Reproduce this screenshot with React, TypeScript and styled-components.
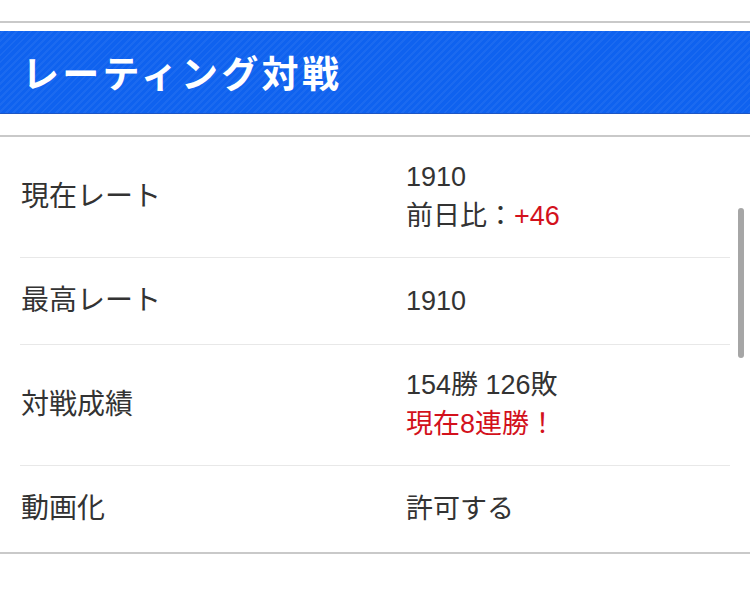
import React from "react";
import styled, { createGlobalStyle } from "styled-components";

const GlobalStyle = createGlobalStyle`
  html, body {
    margin: 0;
    padding: 0;
    background: #ffffff;
  }
  body {
    font-family: "Liberation Sans", "Noto Sans CJK JP", sans-serif;
    color: #333333;
  }
`;

const Page = styled.div`
  position: relative;
  width: 750px;
  height: 592px;
  overflow: hidden;
  padding-top: 21px;
  box-sizing: border-box;
`;

const TopRule = styled.div`
  height: 2px;
  background: #c9c9c9;
`;

const Banner = styled.div`
  margin-top: 8px;
  height: 82px;
  display: flex;
  align-items: center;
  padding-left: 22px;
  border-bottom: 1px solid #1d56c4;
  background-color: #0f62ef;
  background-image: repeating-linear-gradient(
    -45deg,
    rgba(255, 255, 255, 0.05) 0px,
    rgba(255, 255, 255, 0.05) 2px,
    rgba(255, 255, 255, 0) 2px,
    rgba(255, 255, 255, 0) 5px
  );

  h1 {
    margin: 0;
    font-family: "Noto Sans CJK JP", sans-serif;
    font-size: 37px;
    font-weight: 700;
    letter-spacing: 3.3px;
    color: #ffffff;
    line-height: 1;
  }
`;

const Card = styled.div`
  margin-top: 21px;
  border-top: 2px solid #c9c9c9;
  border-bottom: 2px solid #c9c9c9;
`;

const Row = styled.div`
  margin: 0 20px;
  display: grid;
  grid-template-columns: 386px 1fr;
  align-items: center;
  padding: 21px 0;
  border-bottom: 1px solid #e8e8e8;

  &:last-child {
    border-bottom: none;
  }
`;

const Label = styled.div`
  padding-left: 1px;
  font-size: 28px;
  line-height: 44px;
  color: #333333;
`;

const Values = styled.div`
  display: flex;
  flex-direction: column;
  font-size: 27px;
  line-height: 39px;
  color: #333333;
`;

const Red = styled.span`
  color: #d3111c;
`;

const ScrollThumb = styled.div`
  position: absolute;
  left: 738px;
  top: 208px;
  width: 6px;
  height: 150px;
  border-radius: 3px;
  background: #a6a6a6;
`;

export default function App() {
  return (
    <>
      <GlobalStyle />
      <Page>
        <TopRule />
        <Banner>
          <h1>レーティング対戦</h1>
        </Banner>
        <Card>
          <Row>
            <Label>現在レート</Label>
            <Values>
              <span>1910</span>
              <span>
                前日比：<Red>+46</Red>
              </span>
            </Values>
          </Row>
          <Row>
            <Label>最高レート</Label>
            <Values>
              <span>1910</span>
            </Values>
          </Row>
          <Row>
            <Label>対戦成績</Label>
            <Values>
              <span>154勝 126敗</span>
              <Red>現在8連勝！</Red>
            </Values>
          </Row>
          <Row>
            <Label>動画化</Label>
            <Values>
              <span>許可する</span>
            </Values>
          </Row>
        </Card>
        <ScrollThumb />
      </Page>
    </>
  );
}
